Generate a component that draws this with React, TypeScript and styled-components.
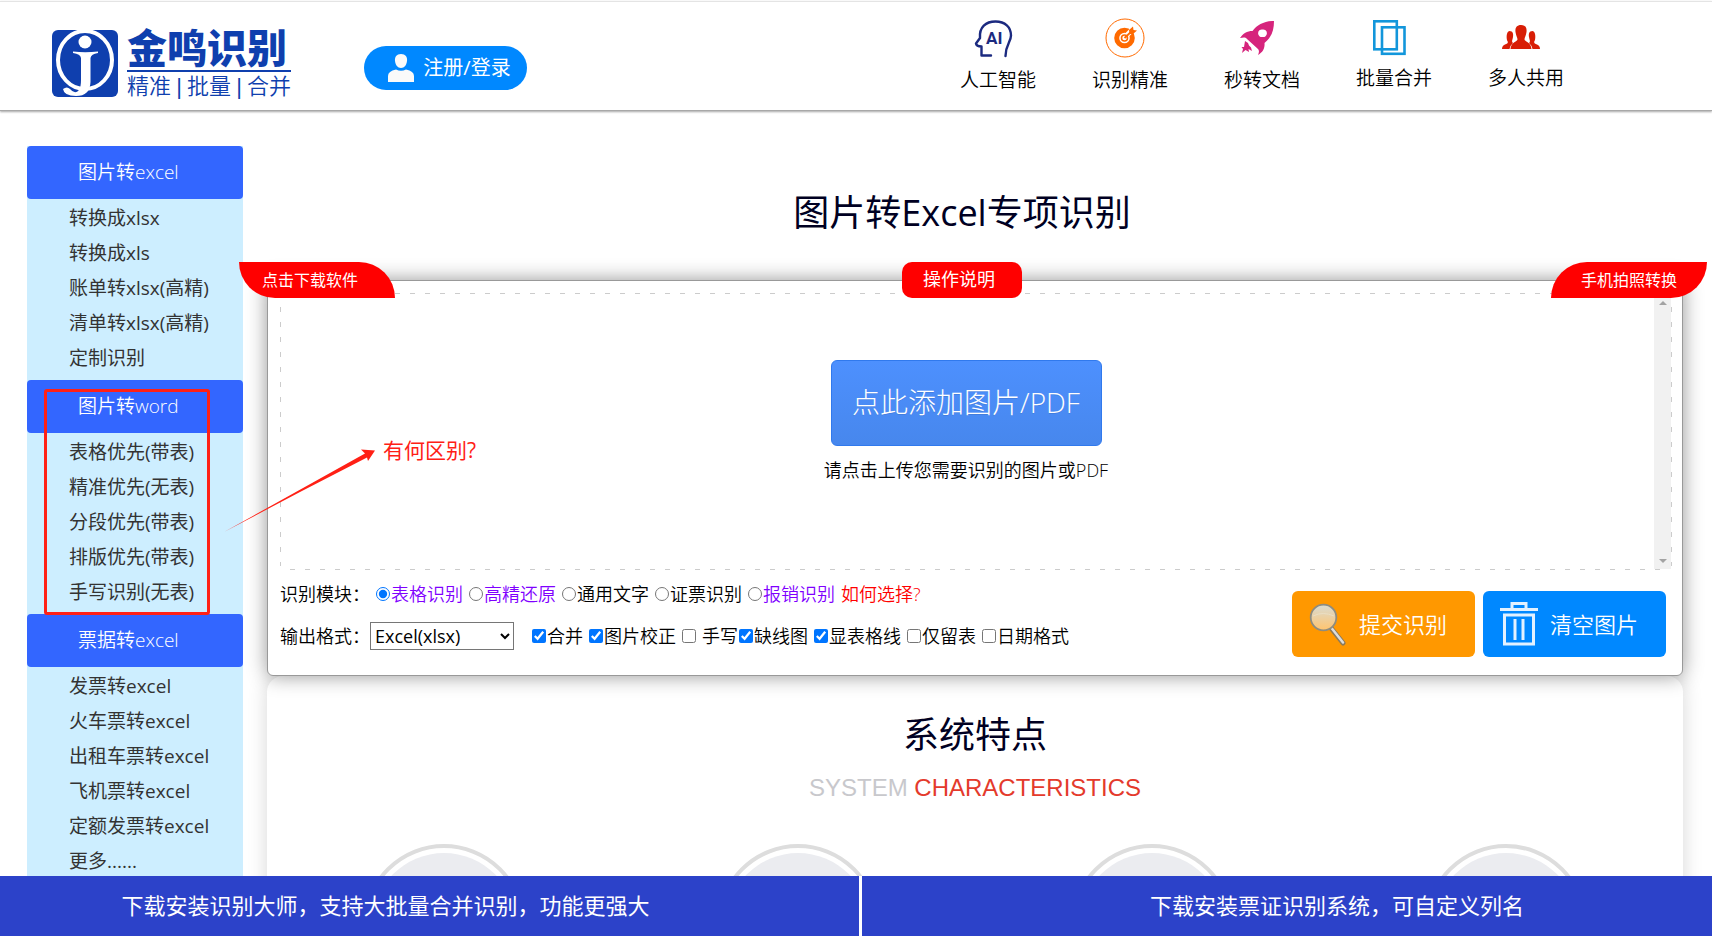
import React from "react";
import styled, { createGlobalStyle, css } from "styled-components";

const GlobalStyle = createGlobalStyle`
  *, *::before, *::after { box-sizing: border-box; }
  body {
    margin: 0;
    background: #fff;
    color: #000;
    font-family: "Open Sans", "Noto Sans CJK SC", sans-serif;
    font-weight: 350;
  }
  a { color: inherit; text-decoration: none; }
  h1, h2, p, ul { margin: 0; padding: 0; font-weight: inherit; }
  button, select { font: inherit; }
`;

const Page = styled.div`
  display: flex;
  flex-direction: column;
  height: 100vh;
  overflow: hidden;
`;

/* ---------- header ---------- */

const Header = styled.header`
  display: flex;
  flex: none;
  align-items: flex-start;
  height: 110px;
  margin: 1px 0;
  padding-left: 52px;
  padding-right: 148px;
  border-top: 1px solid #e4e4e4;
  border-bottom: 1px solid #a8a8a8;
  box-shadow: 0 1px 2px rgba(0, 0, 0, 0.35);
`;

const Brand = styled.a`
  display: flex;
  gap: 9px;
  margin-top: 28px;
  color: #0f3fae;
  font-family: "Liberation Sans", "Noto Sans CJK SC", sans-serif;
`;

const BrandText = styled.span`
  display: flex;
  flex-direction: column;
  width: 164px;
`;

const BrandName = styled.span`
  height: 42px;
  border-bottom: 2px solid #0f3fae;
  font-size: 40px;
  line-height: 38px;
  font-weight: 900;
`;

const BrandMotto = styled.span`
  display: flex;
  justify-content: space-between;
  padding-top: 1px;
  font-size: 22px;
  line-height: 28px;
`;

const LoginButton = styled.button`
  display: flex;
  align-items: center;
  justify-content: center;
  gap: 9px;
  width: 163px;
  height: 44px;
  margin: 44px 0 0 73px;
  padding: 0 0 0 8px;
  border: 0;
  border-radius: 22px;
  background: #08f;
  color: #fff;
  font-size: 20px;
  line-height: 28px;
  font-weight: 400;
  white-space: nowrap;
`;

const FeatureNav = styled.nav`
  display: flex;
  gap: 56px;
  margin-left: auto;
`;

const Feature = styled.a`
  display: flex;
  flex-direction: column;
  align-items: center;
  width: 76px;
  padding-top: 16px;
  font-size: 19px;
  line-height: 28px;
  white-space: nowrap;
  svg { margin: 0 10px 8px 0; }
`;

/* ---------- body ---------- */

const Body = styled.div`
  position: relative;
  display: flex;
  flex: 1;
  align-items: flex-start;
  min-height: 0;
  overflow: hidden;
  padding: 34px 29px 0 27px;
`;

const Sidebar = styled.nav`
  flex: none;
  width: 216px;
  background: #cdeeff;
`;

const SideHeading = styled.h2`
  padding-left: 51px;
  border-radius: 4px;
  background: #36f;
  color: #fff;
  font-size: 19px;
  line-height: 53px;
`;

const SideList = styled.ul`
  display: grid;
  gap: 5px;
  padding: 4px 0 7px 42px;
  list-style: none;
  color: #333;
  font-size: 19px;
  line-height: 30px;
  font-weight: 400;
  white-space: nowrap;
`;

const Main = styled.main`
  flex: 1;
  min-width: 0;
  margin-left: 24px;
`;

const Title = styled.h1`
  padding: 40px 26px 40px 0;
  color: #002;
  font-size: 36px;
  line-height: 54px;
  font-weight: 400;
  text-align: center;
`;

const Panel = styled.section`
  position: relative;
  height: 396px;
  padding: 12px 10px 0 12px;
  border: 1px solid #999;
  border-radius: 6px;
  background: #fff;
  box-shadow: 0 0 20px rgba(0, 0, 0, 0.42);
`;

const Tag = styled.a<{ $place: "left" | "center" | "right" }>`
  position: absolute;
  z-index: 1;
  top: -19px;
  height: 36px;
  background: #f00;
  color: #fff;
  line-height: 34px;
  font-weight: 400;
  text-align: center;
  white-space: nowrap;
  ${({ $place }) =>
    $place === "center"
      ? css`
          left: calc(50% - 73px);
          width: 120px;
          padding-right: 6px;
          border-radius: 10px;
          font-size: 18px;
        `
      : css`
          width: 156px;
          font-size: 16px;
          line-height: 36px;
        `}
  ${({ $place }) =>
    $place === "left" &&
    css`
      left: -29px;
      padding-right: 14px;
      border-radius: 0 36px 0 36px;
    `}
  ${({ $place }) =>
    $place === "right" &&
    css`
      right: -25px;
      border-radius: 36px 0 36px 0;
    `}
`;

const dashX = "repeating-linear-gradient(90deg, transparent 0 6px, #ccc 6px 11px, transparent 11px 15px)";
const dashY = "repeating-linear-gradient(180deg, transparent 0 10px, #ccc 10px 15px)";

const DropArea = styled.div`
  display: flex;
  height: 277px;
  padding: 1px;
  background:
    ${dashX} 4px 0 / calc(100% - 8px) 1px no-repeat,
    ${dashX} 4px 100% / calc(100% - 8px) 1px no-repeat,
    ${dashY} 0 4px / 1px calc(100% - 8px) no-repeat,
    ${dashY} 100% 4px / 1px calc(100% - 8px) no-repeat;
`;

const DropContent = styled.div`
  display: flex;
  flex: 1;
  flex-direction: column;
  align-items: center;
  padding: 66px 3px 0 0;
`;

const AddButton = styled.button`
  width: 271px;
  height: 86px;
  padding: 0 0 4px;
  border: 1px solid #3079ed;
  border-radius: 6px;
  background: linear-gradient(#4d90fe, #4787ed);
  color: #fff;
  font-size: 28px;
  font-weight: 300;
  white-space: nowrap;
  text-shadow: 0 1px rgba(0, 0, 0, 0.1);
`;

const Hint = styled.p`
  padding-top: 10px;
  font-size: 18px;
  line-height: 28px;
`;

const ScrollTrack = styled.div`
  display: flex;
  flex-direction: column;
  align-items: center;
  justify-content: space-between;
  width: 17px;
  padding: 7px 0 6px;
  background: #f1f1f1;
`;

const ScrollArrow = styled.span<{ $down?: boolean }>`
  border: 4px solid transparent;
  ${({ $down }) =>
    $down ? "border-top-color: #a3a3a3; border-bottom: 0;" : "border-bottom-color: #a3a3a3; border-top: 0;"}
`;

const Controls = styled.div`
  display: flex;
  align-items: flex-start;
  justify-content: space-between;
`;

const Options = styled.form`
  display: grid;
  gap: 15px;
  padding-top: 11px;
  font-size: 18px;
  line-height: 26px;
`;

const OptionRow = styled.div`
  display: flex;
  align-items: center;
  white-space: nowrap;
`;

const Caption = styled.label`
  width: 90px;
`;

const Choices = styled.div<{ $wide?: boolean }>`
  display: flex;
  gap: 6px;
  padding-left: ${({ $wide }) => ($wide ? 18 : 6)}px;
`;

const Choice = styled.label<{ $accent?: boolean; $loose?: boolean }>`
  display: flex;
  align-items: center;
  gap: ${({ $loose }) => ($loose ? 6 : 1)}px;
  margin-right: ${({ $loose }) => ($loose ? -5 : 0)}px;
  color: ${({ $accent }) => ($accent ? "#7f00ff" : "#000")};
  input {
    width: 14px;
    height: 14px;
    margin: 0;
    accent-color: #0075ff;
  }
`;

const HelpLink = styled.a`
  color: #f00;
`;

const FormatSelect = styled.select`
  width: 144px;
  height: 28px;
  padding: 0;
  border: 1px solid #767676;
  border-radius: 0;
  background: #fff;
  color: #000;
  font-size: 18px;
  font-weight: 400;
`;

const Actions = styled.div`
  display: flex;
  gap: 8px;
  padding: 21px 6px 0 0;
`;

const ActionButton = styled.button<{ $color: string }>`
  display: flex;
  align-items: center;
  gap: 12px;
  width: 183px;
  height: 66px;
  padding: 0 0 0 17px;
  border: 0;
  border-radius: 6px;
  background: ${({ $color }) => $color};
  color: #fff;
  font-size: 22px;
  line-height: 30px;
  white-space: nowrap;
`;

const Characteristics = styled.section`
  height: 480px;
  padding-top: 32px;
  border-radius: 16px;
  box-shadow: 0 0 20px rgba(0, 0, 0, 0.16);
  text-align: center;
`;

const SectionTitle = styled.h2`
  color: #002;
  font-size: 36px;
  line-height: 54px;
  font-weight: 400;
`;

const SectionSubtitle = styled.p`
  padding-top: 12px;
  color: #c8c8cc;
  font-family: "Liberation Sans", Arial, sans-serif;
  font-size: 24px;
  line-height: 28px;
  font-weight: 400;
  em { color: #e43a2c; font-style: normal; }
`;

const DiscRow = styled.div`
  display: grid;
  grid-template-columns: repeat(4, 1fr);
  justify-items: center;
  padding-top: 42px;
`;

const Disc = styled.div`
  width: 162px;
  height: 162px;
  padding: 5px;
  border: 4px solid #ddd;
  border-radius: 50%;
  &::before {
    content: "";
    display: block;
    height: 100%;
    border-radius: 50%;
    background: #ebecf0;
  }
`;

/* ---------- annotation ---------- */

const Frame = styled.div`
  position: absolute;
  top: 277px;
  left: 44px;
  width: 166px;
  height: 226px;
  border: 3px solid #ff2015;
  border-radius: 3px;
`;

const Arrow = styled.svg`
  position: absolute;
  top: 333px;
  left: 220px;
`;

const Remark = styled.p`
  position: absolute;
  top: 323px;
  left: 383px;
  color: #ff2015;
  font-size: 21px;
  line-height: 30px;
  font-weight: 400;
`;

/* ---------- footer ---------- */

const Footer = styled.footer`
  display: flex;
  flex: none;
  gap: 3px;
  height: 60px;
  color: #fff;
  font-size: 22px;
  font-weight: 400;
  line-height: 58px;
  text-align: center;
  white-space: nowrap;
`;

const FooterLink = styled.a<{ $first?: boolean }>`
  flex: ${({ $first }) => ($first ? "none" : 1)};
  width: ${({ $first }) => ($first ? "calc(50% + 3px)" : "auto")};
  padding: ${({ $first }) => ($first ? "0 88px 0 0" : "0 0 0 100px")};
  background: #2c42c9;
`;

/* ---------- drawings ---------- */

const LogoMark = () => (
  <svg width="66" height="67" viewBox="0 0 66 67" aria-hidden="true">
    <rect width="66" height="67" rx="6" fill="#0f3fae" />
    <ellipse cx="33" cy="30" rx="27" ry="29" fill="none" stroke="#fff" strokeWidth="4" />
    <circle cx="33" cy="12" r="6.5" fill="#fff" />
    <path d="M21 21.5Q33 23 46 21.500V23Q39 24 38.500 28V52Q38 66 24 66Q12 66 11 59Q15 56 18 59Q23 65 27 60Q29 57 29 50V28Q28.500 24 21 23Z" fill="#fff" />
  </svg>
);

const PersonIcon = () => (
  <svg width="26" height="28" viewBox="0 0 26 28" fill="#fafafa" aria-hidden="true">
    <path d="M13 0C8.500 0 6.500 3 7 7C7.500 11 9.500 14 13 14S18.500 11 19 7C19.500 3 17.500 0 13 0Z" />
    <path d="M0 28V22Q0 17 8 15.500Q13 18 18 15.500Q26 17 26 22V28Z" />
  </svg>
);

const AiIcon = () => (
  <svg width="40" height="40" viewBox="0 0 40 40" fill="none" stroke="#1b2a80" strokeWidth="2.400" aria-hidden="true">
    <path d="M18 37.500H8.500V28.500Q3.500 28.500 3 25.500L7 20C6 9 13 3.500 22.500 3.500C32 3.500 38 9 38 17.500C38 24 32.500 26.500 32.500 38" strokeLinejoin="round" strokeLinecap="round" />
    <text x="13" y="26" fill="#1b2a80" stroke="none" fontFamily="Roboto, sans-serif" fontSize="17" fontWeight="700">AI</text>
  </svg>
);

const TargetIcon = () => (
  <svg width="40" height="40" viewBox="0 0 40 40" fill="none" stroke="#ff6a00" aria-hidden="true">
    <circle cx="20" cy="20" r="19" strokeWidth="1" />
    <circle cx="19.500" cy="20" r="7.800" strokeWidth="5" />
    <path d="M19 20L28 11" stroke="#fff" strokeWidth="5" />
    <circle cx="19.500" cy="20" r="3" strokeWidth="1.600" />
    <path d="M19.500 20L27 13" strokeWidth="1.800" />
    <path d="M24 12L28 8.500L28.500 12L32 12.500L28 16H24.500Z" fill="#ff6a00" stroke="none" />
  </svg>
);

const RocketIcon = () => (
  <svg width="40" height="40" viewBox="0 0 40 40" fill="#d6247c" aria-hidden="true">
    <path
      fillRule="evenodd"
      d="M37 3C27 3 20 7 15.500 13C10 13 6 15.500 3 20C7 19 9.500 19.500 10 21L21 31C22 32 22.500 34 21 37C26 34 28 30 27.500 25C34 20 37 13 37 3ZM25.500 11.500A3.800 3.800 0 1 1 25.500 19A3.800 3.800 0 1 1 25.500 11.500Z"
    />
    <path d="M8 23L11 25L12 27.500L14 29.500L15 33L11.500 31L12 34L8.500 32L5 35L6 31L4.500 29L7 29Z" />
  </svg>
);

const PagesIcon = () => (
  <svg width="40" height="38" viewBox="0 0 40 38" fill="none" stroke="#1296db" strokeWidth="2.600" aria-hidden="true">
    <rect x="5.300" y="3.300" width="22.500" height="28" />
    <rect x="13" y="9.300" width="22.500" height="26.500" />
  </svg>
);

const TeamIcon = () => (
  <svg width="40" height="38" viewBox="0 0 40 38" fill="#d81e06" aria-hidden="true">
    <path d="M8.500 13C12 13 12.500 16 12 19C11.500 22 10.500 23 11.500 24.500L12 25Q9.500 27 8.500 31H1Q1 27.500 4 26.500Q7 25.500 7 24C5 22 5 13 8.500 13Z" />
    <path d="M31.500 13C28 13 27.500 16 28 19C28.500 22 29.500 23 28.500 24.500L28 25Q30.500 27 31.500 31H39Q39 27.500 36 26.500Q33 25.500 33 24C35 22 35 13 31.500 13Z" />
    <path d="M20 7C24.500 7 26 10 25.500 14C25 18 23.500 19.500 23.500 21.500C24 24 30 24 30.500 31H9.500C10 24 16 24 16.500 21.500C16.500 19.500 15 18 14.500 14C14 10 15.500 7 20 7Z" />
  </svg>
);

const MagnifierIcon = () => (
  <svg width="38" height="44" viewBox="0 0 38 44" aria-hidden="true">
    <defs>
      <linearGradient id="lens" x1="0" y1="0" x2="0" y2="1">
        <stop offset="0" stopColor="#d9dcd4" />
        <stop offset="1" stopColor="#ffc46e" />
      </linearGradient>
    </defs>
    <path d="M22 26L34 41" stroke="#8b7a5c" strokeWidth="5" strokeLinecap="round" />
    <path d="M22.500 26L34 40.500" stroke="#dcdcdc" strokeWidth="2.500" strokeLinecap="round" />
    <circle cx="14.500" cy="15.500" r="12.800" fill="url(#lens)" stroke="#8d8c80" strokeWidth="1.800" />
    <path d="M4 14Q14 9 25 14" fill="none" stroke="#eadfc5" strokeWidth="1" />
  </svg>
);

const TrashIcon = () => (
  <svg width="38" height="44" viewBox="0 0 38 44" fill="none" stroke="#e2f1ff" strokeWidth="3" aria-hidden="true">
    <path d="M0 7.500H38M12 7V1.500H26V7" />
    <rect x="4.500" y="13" width="29" height="29" />
    <path d="M15 17V38M23 17V38" />
  </svg>
);

/* ---------- data ---------- */

const features = [
  { label: "人工智能", Icon: AiIcon },
  { label: "识别精准", Icon: TargetIcon },
  { label: "秒转文档", Icon: RocketIcon },
  { label: "批量合并", Icon: PagesIcon },
  { label: "多人共用", Icon: TeamIcon },
];

const menu = [
  { title: "图片转excel", items: ["转换成xlsx", "转换成xls", "账单转xlsx(高精)", "清单转xlsx(高精)", "定制识别"] },
  { title: "图片转word", items: ["表格优先(带表)", "精准优先(无表)", "分段优先(带表)", "排版优先(带表)", "手写识别(无表)"] },
  { title: "票据转excel", items: ["发票转excel", "火车票转excel", "出租车票转excel", "飞机票转excel", "定额发票转excel", "更多......"] },
];

const modules = [
  { label: "表格识别", accent: true },
  { label: "高精还原", accent: true },
  { label: "通用文字" },
  { label: "证票识别" },
  { label: "报销识别", accent: true },
];

const formats = [
  { label: "合并", on: true },
  { label: "图片校正", on: true },
  { label: "手写", loose: true },
  { label: "缺线图", on: true },
  { label: "显表格线", on: true },
  { label: "仅留表" },
  { label: "日期格式" },
];

export default function App() {
  return (
    <Page>
      <GlobalStyle />
      <Header>
        <Brand href="#">
          <LogoMark />
          <BrandText>
            <BrandName>金鸣识别</BrandName>
            <BrandMotto>
              <span>精准</span>
              <span>|</span>
              <span>批量</span>
              <span>|</span>
              <span>合并</span>
            </BrandMotto>
          </BrandText>
        </Brand>
        <LoginButton type="button">
          <PersonIcon />
          注册/登录
        </LoginButton>
        <FeatureNav>
          {features.map(({ label, Icon }) => (
            <Feature href="#" key={label}>
              <Icon />
              {label}
            </Feature>
          ))}
        </FeatureNav>
      </Header>

      <Body>
        <Sidebar>
          {menu.map(({ title, items }) => (
            <React.Fragment key={title}>
              <SideHeading>{title}</SideHeading>
              <SideList>
                {items.map((item) => (
                  <li key={item}>
                    <a href="#">{item}</a>
                  </li>
                ))}
              </SideList>
            </React.Fragment>
          ))}
        </Sidebar>

        <Main>
          <Title>图片转Excel专项识别</Title>
          <Panel>
            <Tag href="#" $place="left">点击下载软件</Tag>
            <Tag href="#" $place="center">操作说明</Tag>
            <Tag href="#" $place="right">手机拍照转换</Tag>
            <DropArea>
              <DropContent>
                <AddButton type="button">点此添加图片/PDF</AddButton>
                <Hint>请点击上传您需要识别的图片或PDF</Hint>
              </DropContent>
              <ScrollTrack>
                <ScrollArrow />
                <ScrollArrow $down />
              </ScrollTrack>
            </DropArea>
            <Controls>
              <Options>
                <OptionRow>
                  <Caption as="span">识别模块：</Caption>
                  <Choices>
                    {modules.map(({ label, accent }, i) => (
                      <Choice key={label} $accent={accent}>
                        <input type="radio" name="module" defaultChecked={i === 0} />
                        {label}
                      </Choice>
                    ))}
                    <HelpLink href="#">如何选择?</HelpLink>
                  </Choices>
                </OptionRow>
                <OptionRow>
                  <Caption htmlFor="format">输出格式：</Caption>
                  <FormatSelect id="format" defaultValue="xlsx">
                    <option value="xlsx">Excel(xlsx)</option>
                    <option value="xls">Excel(xls)</option>
                  </FormatSelect>
                  <Choices $wide>
                    {formats.map(({ label, on, loose }) => (
                      <Choice key={label} $loose={loose}>
                        <input type="checkbox" defaultChecked={on} />
                        {label}
                      </Choice>
                    ))}
                  </Choices>
                </OptionRow>
              </Options>
              <Actions>
                <ActionButton type="button" $color="#ff9800">
                  <MagnifierIcon />
                  提交识别
                </ActionButton>
                <ActionButton type="button" $color="#0088ff">
                  <TrashIcon />
                  清空图片
                </ActionButton>
              </Actions>
            </Controls>
          </Panel>
          <Characteristics>
            <SectionTitle>系统特点</SectionTitle>
            <SectionSubtitle>
              SYSTEM <em>CHARACTERISTICS</em>
            </SectionSubtitle>
            <DiscRow>
              <Disc />
              <Disc />
              <Disc />
              <Disc />
            </DiscRow>
          </Characteristics>
        </Main>

        <Frame />
        <Arrow width="160" height="92" viewBox="0 0 160 92" fill="#ff2015" aria-hidden="true">
          <path d="M4 87L145 8.500L141 4.500L155 5.500L148 16L147 12.500L80 47Z" />
        </Arrow>
        <Remark>有何区别?</Remark>
      </Body>

      <Footer>
        <FooterLink href="#" $first>下载安装识别大师，支持大批量合并识别，功能更强大</FooterLink>
        <FooterLink href="#">下载安装票证识别系统，可自定义列名</FooterLink>
      </Footer>
    </Page>
  );
}
